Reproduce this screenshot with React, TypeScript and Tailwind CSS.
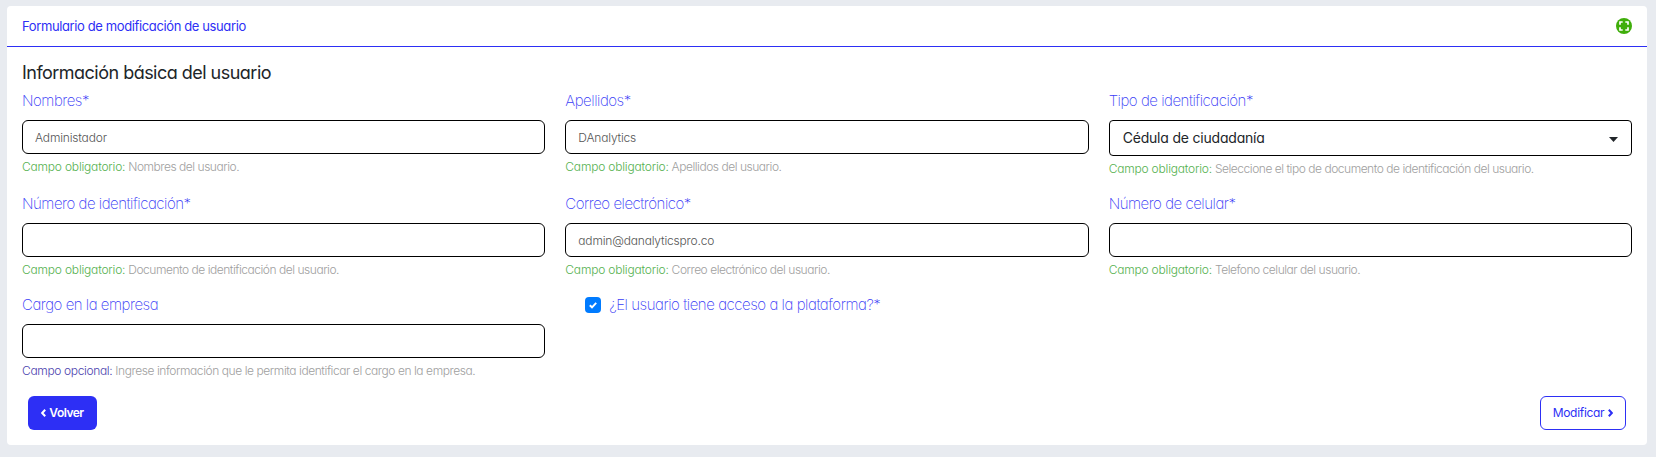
import type { ReactNode } from 'react';

function Field({
  label,
  help,
  optional,
  children,
}: {
  label: string;
  help: string;
  optional?: boolean;
  children: ReactNode;
}) {
  return (
    <div>
      <label className="mb-[9px] block h-[21px] pt-px text-[15px] leading-5 font-extralight tracking-[-0.48px] whitespace-nowrap text-[#3a3cf6]">
        {label}
      </label>
      {children}
      <p className="mt-1 flex h-[18px] gap-[3px] text-[12px] leading-[18px] font-light whitespace-nowrap">
        <span className={optional ? 'tracking-[-0.35px] text-[#4b3fae]' : 'tracking-[-0.2px] text-[#55b14f]'}>
          {optional ? 'Campo opcional:' : 'Campo obligatorio:'}
        </span>
        <span className={optional ? 'tracking-[-0.43px] text-[#a0a0a0]' : 'tracking-[-0.47px] text-[#a0a0a0]'}>
          {help}
        </span>
      </p>
    </div>
  );
}

function Input({ value = '' }: { value?: string }) {
  return (
    <input
      readOnly
      value={value}
      className="block h-[34px] w-full rounded-[6px] border border-black bg-white px-3 pt-px text-[12px] font-light tracking-[-0.18px] text-[#555] outline-none"
    />
  );
}

export default function App() {
  return (
    <div className="h-[457px] bg-[#e8ebf0] pt-[6px] pr-[9px] pl-[7px] font-['Inter',sans-serif] [font-feature-settings:'cv11']">
      <section className="h-[439px] overflow-hidden rounded-[4px] bg-white">
        <header className="flex h-[41px] items-center justify-between border-b border-[#2d2ff5] px-[15px]">
          <h1 className="pt-[2px] text-[13px] tracking-[-0.38px] text-[#2d2ff5]">Formulario de modificación de usuario</h1>
          <svg viewBox="0 0 16 16" className="size-4">
            <circle cx="8" cy="8" r="8" fill="#3fae0a" />
            <path
              d="M4 6.7V4h2.7M9.3 4H12v2.7M12 9.3V12H9.3M6.7 12H4V9.3"
              fill="none"
              stroke="#fff"
              strokeWidth="1.7"
            />
          </svg>
        </header>

        <div className="px-[15px] pt-[13px]">
          <h2 className="mb-[5px] h-[25px] text-[18px] leading-[25px] tracking-[-0.52px] text-[#212529]">
            Información básica del usuario
          </h2>

          <div className="grid grid-cols-3 gap-x-5 gap-y-[15px]">
            <Field label="Nombres*" help="Nombres del usuario.">
              <Input value="Administador" />
            </Field>
            <Field label="Apellidos*" help="Apellidos del usuario.">
              <Input value="DAnalytics" />
            </Field>
            <Field label="Tipo de identificación*" help="Seleccione el tipo de documento de identificación del usuario.">
              <div className="flex h-9 items-center justify-between rounded-[4px] border border-black pr-[13px] pb-px pl-[13px] text-[14px] tracking-[-0.2px] text-[#212529]">
                <span>Cédula de ciudadanía</span>
                <svg viewBox="0 0 9 5" className="mt-[3px] h-[5px] w-[9px]">
                  <path d="M0 0h9L4.5 5z" fill="#212529" />
                </svg>
              </div>
            </Field>
            <Field label="Número de identificación*" help="Documento de identificación del usuario.">
              <Input />
            </Field>
            <Field label="Correo electrónico*" help="Correo electrónico del usuario.">
              <Input value="admin@danalyticspro.co" />
            </Field>
            <Field label="Número de celular*" help="Telefono celular del usuario.">
              <Input />
            </Field>
            <Field label="Cargo en la empresa" optional help="Ingrese información que le permita identificar el cargo en la empresa.">
              <Input />
            </Field>
            <label className="flex h-[22px] items-center gap-2 pl-5 text-[15px] font-extralight tracking-[-0.46px] text-[#3a3cf6]">
              <span className="flex size-4 items-center justify-center rounded-[4px] bg-[#007bff]">
                <svg viewBox="0 0 8 8" className="size-2">
                  <path d="M.8 4.2 3 6.3 7.2 1.8" fill="none" stroke="#fff" strokeWidth="1.9" />
                </svg>
              </span>
              ¿El usuario tiene acceso a la plataforma?*
            </label>
          </div>

          <div className="mt-4 flex justify-between px-[6px]">
            <button className="flex h-[34px] w-[69px] items-center justify-center gap-[3px] rounded-[6px] bg-[#2d2ff5] text-[12px] font-semibold tracking-[-0.5px] text-white">
              <svg viewBox="0 0 5 8" className="h-2 w-[5px]">
                <path d="M4.2.8 1.2 4l3 3.2" fill="none" stroke="currentColor" strokeWidth="2" />
              </svg>
              Volver
            </button>
            <button className="flex h-[34px] w-[86px] items-center justify-center gap-1 rounded-[6px] border border-[#2d2ff5] bg-white text-[12px] tracking-[-0.3px] text-[#2d2ff5]">
              Modificar
              <svg viewBox="0 0 5 8" className="h-2 w-[5px]">
                <path d="m.8.8 3 3.2-3 3.2" fill="none" stroke="currentColor" strokeWidth="2" />
              </svg>
            </button>
          </div>
        </div>
      </section>
    </div>
  );
}
